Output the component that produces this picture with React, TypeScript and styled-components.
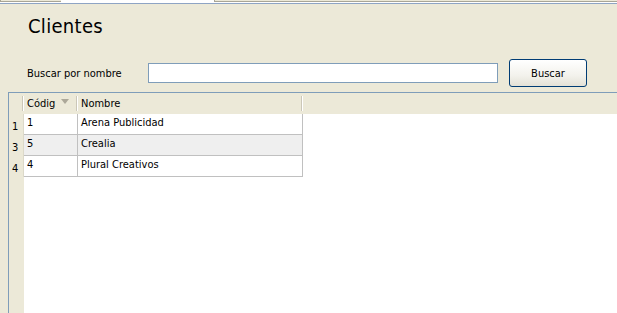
import React from 'react'
import styled, { createGlobalStyle } from 'styled-components'

const GlobalStyle = createGlobalStyle`
  html, body {
    margin: 0;
    padding: 0;
    background: #ece9d8;
  }
  body {
    font-family: "DejaVu Sans Condensed", "Liberation Sans", sans-serif;
    font-size: 11px;
    color: #000000;
  }
`

const Page = styled.div`
  display: flex;
  flex-direction: column;
  min-height: 100vh;
  width: 100%;
`

const TabStrip = styled.div`
  display: flex;
  height: 3px;
  background: #ffffff;
  border-bottom: 1px solid #8ea4c4;
`

const Tab = styled.div<{ $width?: number; $active?: boolean }>`
  flex: ${p => (p.$width ? `0 0 ${p.$width}px` : '1')};
  height: 1px;
  background: ${p => (p.$active ? '#ffffff' : '#ece9d8')};
  border-bottom: 1px solid ${p => (p.$active ? '#ffffff' : '#a8a596')};
  border-left: ${p => (p.$active ? 'none' : '1px solid #a8a596')};
`

const Content = styled.div`
  flex: 1;
  display: flex;
  flex-direction: column;
  padding-left: 8px;
`

const Title = styled.h1`
  margin: 9px 0 0 20px;
  font-size: 20px;
  font-weight: normal;
  line-height: 26px;
  letter-spacing: 0.3px;
`

const SearchRow = styled.div`
  display: flex;
  align-items: center;
  margin-top: 20px;
  height: 28px;
`

const Label = styled.label`
  flex: 0 0 140px;
  padding-left: 19px;
  box-sizing: border-box;
`

const SearchInput = styled.input`
  box-sizing: border-box;
  flex: 0 0 350px;
  height: 20px;
  margin: 0;
  border: 1px solid #7f9db9;
  background: #ffffff;
  outline: none;
`

const SearchButton = styled.button`
  box-sizing: border-box;
  flex: 0 0 78px;
  height: 28px;
  margin-left: 11px;
  border: 1px solid #003c74;
  border-radius: 3px;
  background: linear-gradient(#ffffff, #f3f2ec 60%, #e3e1d6);
  font: inherit;
  color: #000000;
`

const TablePanel = styled.div`
  flex: 1;
  display: flex;
  flex-direction: column;
  margin-top: 5px;
  border-top: 1px solid #7f9db9;
  border-left: 1px solid #7f9db9;
  background: #ffffff;
`

const HeaderBar = styled.div`
  display: flex;
  align-items: center;
  height: 21px;
  background: #ece9d8;
`

const HeaderCell = styled.div<{ $width: number }>`
  display: flex;
  align-items: center;
  width: ${p => p.$width}px;
  padding-left: 3px;
  box-sizing: border-box;
  height: 100%;
`

const Divider = styled.div`
  width: 0;
  height: 15px;
  border-left: 1px solid #cbc7b8;
  border-right: 1px solid #ffffff;
`

const SortArrow = styled.span`
  width: 0;
  height: 0;
  margin-left: 6px;
  margin-bottom: 4px;
  border-left: 4px solid transparent;
  border-right: 4px solid transparent;
  border-top: 5px solid #aca899;
`

const Body = styled.div`
  flex: 1;
  display: flex;
`

const RowNumbers = styled.div`
  width: 15px;
  background: #ece9d8;
`

const RowNumber = styled.div`
  display: flex;
  align-items: flex-end;
  height: 21px;
  padding: 0 0 2px 3px;
  box-sizing: border-box;
  border-right: 1px solid #dcd9c9;
`

const Rows = styled.div`
  display: flex;
  flex-direction: column;
`

const Row = styled.div<{ $alt?: boolean }>`
  display: flex;
  height: 21px;
  background: ${p => (p.$alt ? '#efefef' : '#ffffff')};
  border-bottom: 1px solid #c0c0c0;
  box-sizing: border-box;
`

const Cell = styled.div<{ $width: number }>`
  width: ${p => p.$width}px;
  padding: 2px 0 0 3px;
  box-sizing: border-box;
  border-right: 1px solid #c0c0c0;
`

const clientes = [
  { fila: 1, codigo: '1', nombre: 'Arena Publicidad' },
  { fila: 3, codigo: '5', nombre: 'Crealia' },
  { fila: 4, codigo: '4', nombre: 'Plural Creativos' },
]

const App: React.FC = () => {
  return (
    <Page>
      <GlobalStyle />
      <TabStrip>
        <Tab $width={60} />
        <Tab $width={153} $active />
        <Tab />
      </TabStrip>
      <Content>
        <Title>Clientes</Title>
        <SearchRow>
          <Label>Buscar por nombre</Label>
          <SearchInput type="text" />
          <SearchButton>Buscar</SearchButton>
        </SearchRow>
        <TablePanel>
          <HeaderBar>
            <HeaderCell $width={13} />
            <Divider />
            <HeaderCell $width={52}>
              Códig
              <SortArrow />
            </HeaderCell>
            <Divider />
            <HeaderCell $width={223}>Nombre</HeaderCell>
            <Divider />
          </HeaderBar>
          <Body>
            <RowNumbers>
              {clientes.map(c => (
                <RowNumber key={c.fila}>{c.fila}</RowNumber>
              ))}
            </RowNumbers>
            <Rows>
              {clientes.map((c, i) => (
                <Row key={c.fila} $alt={i % 2 === 1}>
                  <Cell $width={54}>{c.codigo}</Cell>
                  <Cell $width={225}>{c.nombre}</Cell>
                </Row>
              ))}
            </Rows>
          </Body>
        </TablePanel>
      </Content>
    </Page>
  )
}

export default App
